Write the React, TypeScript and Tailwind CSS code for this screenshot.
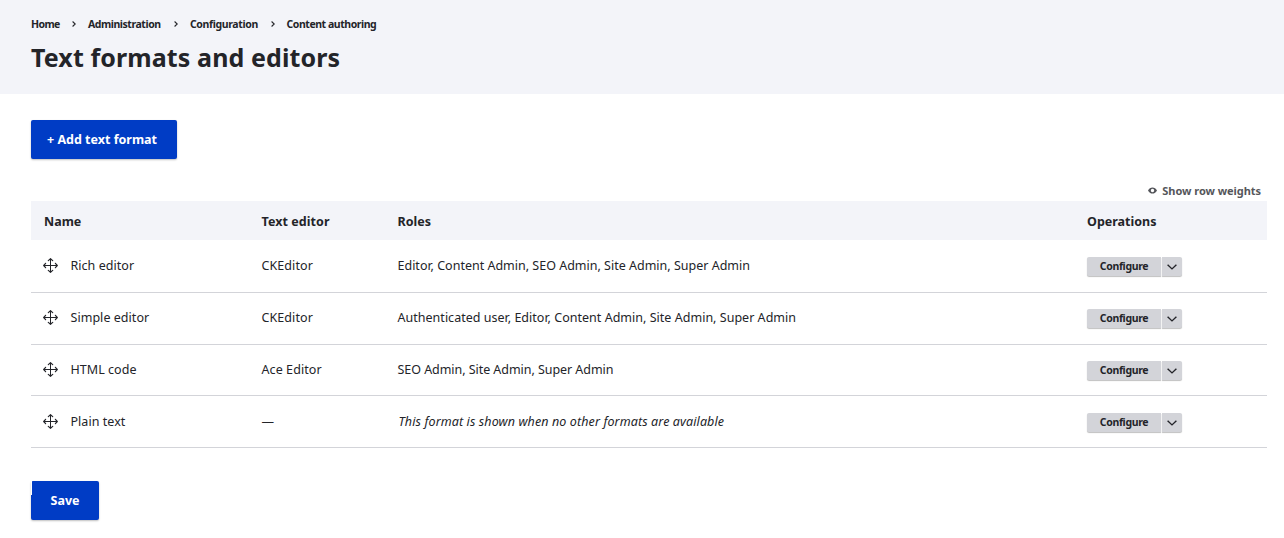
import React from "react";

const crumbs = [
  { label: "Home", cls: "w-[41px] tracking-[-0.6px]" },
  { label: "Administration", cls: "w-[86px]" },
  { label: "Configuration", cls: "w-[80.5px] tracking-[-0.37px]" },
  { label: "Content authoring", cls: "" },
];

const rows = [
  { name: "Rich editor", editor: "CKEditor", roles: "Editor, Content Admin, SEO Admin, Site Admin, Super Admin", roleCls: "", h: "h-[53px] pt-[17px]" },
  { name: "Simple editor", editor: "CKEditor", roles: "Authenticated user, Editor, Content Admin, Site Admin, Super Admin", roleCls: "tracking-[0.02px]", h: "h-[52px] pt-[16px]" },
  { name: "HTML code", editor: "Ace Editor", roles: "SEO Admin, Site Admin, Super Admin", roleCls: "tracking-[-0.05px]", h: "h-[51px] pt-[16px]" },
  { name: "Plain text", editor: "—", roles: "This format is shown when no other formats are available", roleCls: "italic pl-px tracking-[0.11px]", h: "h-[52px] pt-[17px]" },
];

function MoveIcon() {
  return (
    <svg width="15" height="15" viewBox="0 0 15 15" fill="none" stroke="#232429" className="mt-px shrink-0">
      <path d="M7.5 .8v13.4M.8 7.5h13.4" />
      <path strokeLinecap="round" strokeLinejoin="round" strokeWidth="1.15" d="M5.3 2.6 7.5.7l2.2 1.9M5.3 12.4l2.2 1.9 2.2-1.9M2.6 5.3.7 7.5l1.9 2.2M12.4 5.3l1.9 2.2-1.9 2.2" />
    </svg>
  );
}

export default function App() {
  return (
    <div className="h-[538px] w-[1284px] overflow-hidden bg-white font-['Noto_Sans',sans-serif] text-[12.5px] leading-[18px] text-[#232429]">
      <header className="h-[94px] bg-[#f3f4f9] pl-[31px] pt-[16px]">
        <nav className="flex h-4 items-center text-[10.5px] font-bold leading-4 tracking-[-0.45px]">
          {crumbs.map((c, i) => (
            <React.Fragment key={c.label}>
              {i > 0 && (
                <svg width="4" height="6" viewBox="0 0 4 6" fill="none" stroke="#232429" strokeWidth="1.1" className="mr-[12px] shrink-0">
                  <path d="M.6.5 3.2 3 .6 5.5" />
                </svg>
              )}
              <span className={`shrink-0 whitespace-nowrap ${c.cls}`}>{c.label}</span>
            </React.Fragment>
          ))}
        </nav>
        <h1 className="mt-[7px] whitespace-nowrap text-[25px] font-bold leading-[36px] tracking-[0.11px]">
          <span>Text formats and editors</span>
        </h1>
      </header>
      <main className="flex flex-col items-start pl-[31px] pt-[26px]">
        <button className="flex h-[39px] w-[146px] items-center rounded-[2px] bg-[#003cc5] pl-[16px] pt-px font-bold text-white shadow-[0_1px_2px_rgba(0,0,0,0.25)]">
          <span>+ Add text format</span>
        </button>
        <div className="mt-[23px] flex h-[19px] w-[1236px] items-center justify-end pb-px pr-[6px] text-[11px] font-bold tracking-[-0.05px] text-[#55565b]">
          <svg width="9" height="7" viewBox="0 0 9 7" className="mb-[2px] mr-[5px]">
            <path fillRule="evenodd" fill="#55565b" d="M0 3.5C1 1.4 2.6.4 4.5.4S8 1.4 9 3.5C8 5.6 6.4 6.6 4.5 6.6S1 5.6 0 3.5zM4.5 1.8a1.7 1.7 0 1 0 0 3.4 1.7 1.7 0 0 0 0-3.4z" />
          </svg>
          <span>Show row weights</span>
        </div>
        <div className="w-[1236px]">
          <div className="grid h-[39px] grid-cols-[230.5px_136px_689.5px_180px] items-center bg-[#f3f4f9] pt-[2px] font-bold">
            <div className="pl-[13px]">Name</div>
            <div className="tracking-[0.06px]">Text editor</div>
            <div>Roles</div>
            <div>Operations</div>
          </div>
          {rows.map((r) => (
            <div key={r.name} className={`grid grid-cols-[230.5px_136px_689.5px_180px] items-start border-b border-[#d3d4d9] ${r.h}`}>
              <div className="flex items-start pl-[12px]">
                <MoveIcon />
                <span className="ml-[12.5px] tracking-[0.04px]">{r.name}</span>
              </div>
              <div className="tracking-[0.08px]">{r.editor}</div>
              <div className={`whitespace-nowrap ${r.roleCls}`}>
                <span>{r.roles}</span>
              </div>
              <div className="flex text-[10.5px] font-bold tracking-[-0.35px]">
                <button className="flex h-[19px] w-[74px] items-start justify-center rounded-l-[2px] bg-[#d3d4d9] shadow-[0_1px_1px_rgba(0,0,0,0.25)]">
                  <span>Configure</span>
                </button>
                <button className="ml-px flex h-[19px] w-[20px] items-center justify-center rounded-r-[2px] bg-[#d3d4d9] shadow-[0_1px_1px_rgba(0,0,0,0.25)]">
                  <svg width="10" height="6" viewBox="0 0 10 6" fill="none" stroke="#232429" strokeWidth="1.4">
                    <path d="M.6.7 5 4.9 9.4.7" />
                  </svg>
                </button>
              </div>
            </div>
          ))}
        </div>
        <button className="relative mt-[33px] flex h-[39px] w-[68px] items-center justify-center rounded-[2px] bg-[#003cc5] pt-px font-bold text-white shadow-[0_1px_2px_rgba(0,0,0,0.25)]">
          <span>Save</span>
          <i className="absolute left-0 top-0 h-[14px] w-px bg-white" />
        </button>
      </main>
    </div>
  );
}
